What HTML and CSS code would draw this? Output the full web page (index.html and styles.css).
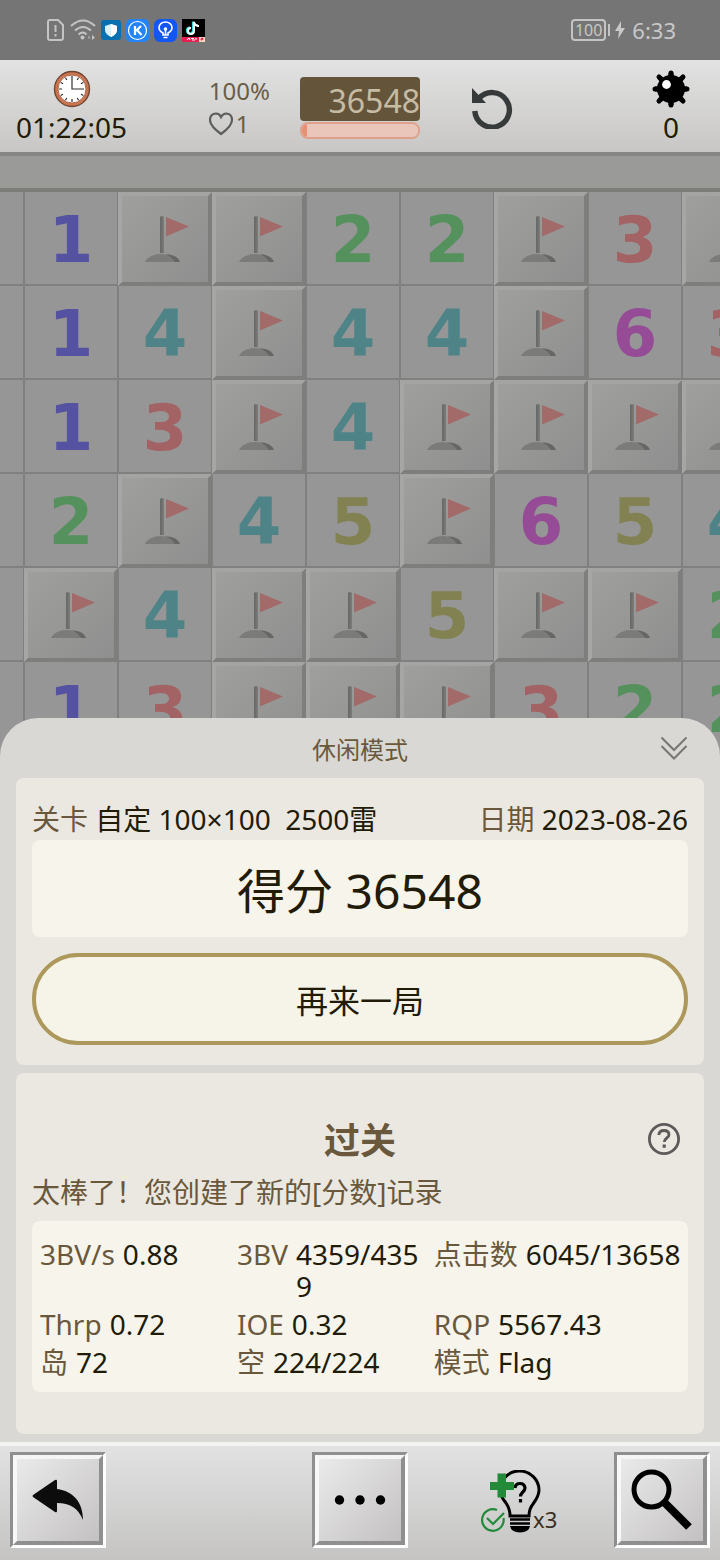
FILE: index.html
```html
<!DOCTYPE html>
<html lang="zh-CN">
<head>
<meta charset="utf-8">
<meta name="viewport" content="width=device-width, initial-scale=1">
<title>休闲模式</title>
<link rel="stylesheet" href="styles.css">
</head>
<body>
<svg class="defs" aria-hidden="true">
  <linearGradient id="pole"><stop offset="0" stop-color="#666664"/><stop offset="1" stop-color="#7c7c7a"/></linearGradient>
  <symbol id="flag" viewBox="4 4 86 86">
    <path d="M45 70c0-4 2-7 4-7.500C55 62 61 66 62 70z" fill="#666664"/>
    <path d="M27 70C29 65 36 62 43 62s11 3 14 8z" fill="#7b7b79"/>
    <path d="M42 25q2-2 4 0v36h-4z" fill="url(#pole)"/>
    <path d="M48 25l23 9.500L48 44.500z" fill="#a26a68"/>
  </symbol>
</svg>

<header class="status">
  <div class="status-group">
    <svg width="18" height="22" viewBox="0 0 18 22" fill="none" stroke="#c4c4c4" stroke-width="2"><path d="M3 1h8l5 5v13q0 2-2 2H3q-2 0-2-2V3q0-2 2-2z"/><path d="M8.500 6v7M8.500 15v2.500"/></svg>
    <svg width="26" height="22" viewBox="0 0 26 22" fill="none" stroke="#c4c4c4" stroke-width="2"><path d="M1 7q12-11 24 0M5 11.500q8-7 16 0M8.500 15.500q4.500-4 8 0"/><circle cx="12.500" cy="18.500" r="2" fill="#c4c4c4" stroke="none"/><path d="M22 16l3 2.500-3 2.500z" fill="#c4c4c4" stroke="none"/><path d="M19 17v3" stroke="#999"/></svg>
    <svg width="20" height="20" viewBox="0 0 20 20"><rect width="20" height="20" rx="3" fill="#0870b0"/><path d="M10 4l6 2v4q0 4-6 7-6-3-6-7V6z" fill="#d9f1fb"/><path d="M10 4l6 2v4q0 4-6 7z" fill="#fff"/></svg>
    <svg width="23" height="23" viewBox="0 0 23 23" fill="none" stroke="#fff"><rect width="23" height="23" rx="5" fill="#2484f5" stroke="none"/><circle cx="11.500" cy="11.500" r="9" stroke-width="1.200"/><path d="M9 7v9M15 7l-5 5M11 11l4.500 5" stroke-width="2.200"/></svg>
    <svg width="23" height="23" viewBox="0 0 23 23" fill="none" stroke="#fff" stroke-width="1.600"><rect width="23" height="23" rx="6" fill="#1257f4" stroke="none"/><path d="M9 16v-2q-4-2-4-5.500a6.500 5.500 0 0 1 13 0Q18 12 14 14v2zM9.500 18.500h4M11.500 11v5"/><circle cx="11.500" cy="10" r="1" fill="#fff"/></svg>
    <svg width="23" height="23" viewBox="0 0 23 23" fill="none"><path fill="#000" d="M0 0h23v23H0z"/><path d="M12 3v9a3 3 0 1 1-3-3M12 3q1 4 5 4" stroke="#35d9df" stroke-width="2.200" transform="translate(-1 -.5)"/><path d="M12 3v9a3 3 0 1 1-3-3M12 3q1 4 5 4" stroke="#fff" stroke-width="2"/><path fill="#e91e50" d="M0 18h23v5H0z"/><path fill="#ffd8c0" d="M17 18h6v5h-6z"/><path d="M5 21l2-2 1 2M9 19.500h3M10 21h3M14 19v2" stroke="#fff"/><path d="M19 21l2-2" stroke="#e91e50" stroke-width="2"/></svg>
  </div>
  <div class="status-group">
    <span class="battery">100</span><span class="battery-tip"></span>
    <svg width="10" height="20" viewBox="0 0 10 20" fill="#c8c8c8"><path d="M6 1L0 11h4l-1 8 7-11H6z"/></svg>
    <span class="time">6:33</span>
  </div>
</header>

<section class="toolbar">
  <div class="side side-left">
    <div class="readout">
      <svg width="38" height="38" viewBox="0 0 38 38"><circle cx="19" cy="19" r="17.500" fill="#cc7350" stroke="#6e4634" stroke-width="1.400"/><circle cx="19" cy="19" r="14" fill="#fff" stroke="#a9694f"/><g stroke="#333" stroke-width="1.200"><path d="M19 6v3M19 29v3M6 19h3M12.500 7.700l1.300 2.300M24.200 28l1.300 2.300M7.700 12.500l2.300 1.300M28 24.200l2.300 1.300M7.700 25.500l2.300-1.300M28 13.800l2.300-1.300M12.500 30.300l1.300-2.300M24.200 10l1.300-2.300M19 9v10h12" fill="none"/></g></svg>
      <span>01:22:05</span>
    </div>
    <div class="lives">
      <span>100%</span>
      <span class="hearts"><svg width="25" height="24" viewBox="0 0 25 24" fill="none" stroke="#5d5d5d" stroke-width="2.200"><path d="M12 22Q1 14 1 8 1 2 7 1.500q3.500 0 5 3.500 2-3.500 5.500-3.500Q23 2 23 8q0 6-11 14z"/></svg>1</span>
    </div>
  </div>
  <div class="score">
    <div class="score-value">36548</div>
    <progress class="score-bar" value="4" max="100" aria-label="进度"></progress>
  </div>
  <div class="side side-right">
    <button class="undo" aria-label="撤销"><svg width="42" height="42" viewBox="0 0 42 42"><path d="M8 11.500A17.300 17.300 0 1 1 3.800 24" fill="none" stroke="#373a3b" stroke-width="5.400"/><path d="M1 1l14 15H1z" fill="#373a3b"/></svg></button>
    <div class="readout">
      <svg width="38" height="38" viewBox="0 0 38 38"><path d="M19 3v32M3 19h32M7 7l24 24M31 7L7 31" stroke="#000" stroke-width="5" stroke-linecap="round"/><path d="M19 3v32M3 19h32M8 8l22 22M30 8L8 30" stroke="#000" stroke-width="5"/><circle cx="19" cy="19" r="14" fill="#000"/><circle cx="14.500" cy="14.500" r="4.400" fill="#fff"/></svg>
      <span>0</span>
    </div>
  </div>
</section>

<div class="ledge"></div>

<main class="board" aria-label="雷区">
  <div class="cells">
    <button class="cell"></button><button class="cell n1">1</button><button class="cell up"><svg><use href="#flag"/></svg></button><button class="cell up"><svg><use href="#flag"/></svg></button><button class="cell n2">2</button><button class="cell n2">2</button><button class="cell up"><svg><use href="#flag"/></svg></button><button class="cell n3">3</button><button class="cell up"><svg><use href="#flag"/></svg></button>
    <button class="cell"></button><button class="cell n1">1</button><button class="cell n4">4</button><button class="cell up"><svg><use href="#flag"/></svg></button><button class="cell n4">4</button><button class="cell n4">4</button><button class="cell up"><svg><use href="#flag"/></svg></button><button class="cell n6">6</button><button class="cell n3">3</button>
    <button class="cell"></button><button class="cell n1">1</button><button class="cell n3">3</button><button class="cell up"><svg><use href="#flag"/></svg></button><button class="cell n4">4</button><button class="cell up"><svg><use href="#flag"/></svg></button><button class="cell up"><svg><use href="#flag"/></svg></button><button class="cell up"><svg><use href="#flag"/></svg></button><button class="cell up"><svg><use href="#flag"/></svg></button>
    <button class="cell"></button><button class="cell n2">2</button><button class="cell up"><svg><use href="#flag"/></svg></button><button class="cell n4">4</button><button class="cell n5">5</button><button class="cell up"><svg><use href="#flag"/></svg></button><button class="cell n6">6</button><button class="cell n5">5</button><button class="cell n4">4</button>
    <button class="cell"></button><button class="cell up"><svg><use href="#flag"/></svg></button><button class="cell n4">4</button><button class="cell up"><svg><use href="#flag"/></svg></button><button class="cell up"><svg><use href="#flag"/></svg></button><button class="cell n5">5</button><button class="cell up"><svg><use href="#flag"/></svg></button><button class="cell up"><svg><use href="#flag"/></svg></button><button class="cell n2">2</button>
    <button class="cell"></button><button class="cell n1">1</button><button class="cell n3">3</button><button class="cell up"><svg><use href="#flag"/></svg></button><button class="cell up"><svg><use href="#flag"/></svg></button><button class="cell up"><svg><use href="#flag"/></svg></button><button class="cell n3">3</button><button class="cell n2">2</button><button class="cell n2">2</button>
  </div>
</main>

<section class="sheet">
  <div class="sheet-head">
    <h1>休闲模式</h1>
    <button class="collapse" aria-label="收起"><svg width="28" height="24" viewBox="0 0 28 24" fill="none" stroke="#777674" stroke-width="2"><path d="M1.500 1.500L14 14 26.500 1.500M1.500 10L14 22.500 26.500 10"/></svg></button>
  </div>

  <div class="card card-score">
    <div class="meta">
      <span><span class="label">关卡</span> 自定 100×100&nbsp; 2500雷</span>
      <span><span class="label">日期</span> 2023-08-26</span>
    </div>
    <div class="panel total">得分 36548</div>
    <button class="again">再来一局</button>
  </div>

  <div class="card card-result">
    <div class="result-head">
      <h2>过关</h2>
      <button class="help" aria-label="帮助"><svg width="34" height="34" viewBox="0 0 34 34" fill="none" stroke="#5c5a5a" stroke-width="2.800"><circle cx="17" cy="17" r="14.600"/><path d="M11.800 13q.4-4.500 5.200-4.500t5 4.200c0 3-4.500 3.500-4.800 7.300"/><path d="M17.200 22.500v3.300" stroke-width="3.200"/></svg></button>
    </div>
    <p class="message">太棒了！您创建了新的[分数]记录</p>
    <dl class="panel stats">
      <div><dt>3BV/s</dt><dd>0.88</dd></div>
      <div><dt>3BV</dt><dd>4359/4359</dd></div>
      <div><dt>点击数</dt><dd class="whole">6045/13658</dd></div>
      <div><dt>Thrp</dt><dd>0.72</dd></div>
      <div><dt>IOE</dt><dd>0.32</dd></div>
      <div><dt>RQP</dt><dd>5567.43</dd></div>
      <div><dt>岛</dt><dd>72</dd></div>
      <div><dt>空</dt><dd>224/224</dd></div>
      <div><dt>模式</dt><dd>Flag</dd></div>
    </dl>
  </div>
</section>

<nav class="bottom">
  <div><button class="key" aria-label="返回"><span><svg width="60" height="60" viewBox="0 0 60 60"><path d="M5 25L27 10q2-1 2 1v8c16 2 26 13 26 31-5-12-13-17-26-17v8q0 2-2 1L5 27q-1-1 0-2z" fill="#0c0c0c"/></svg></span></button></div>
  <button class="key" aria-label="更多"><span><svg width="60" height="60" viewBox="0 0 60 60"><circle cx="9.500" cy="30" r="4.700"/><circle cx="30" cy="30" r="4.700"/><circle cx="50.500" cy="30" r="4.700"/></svg></span></button>
  <div class="bottom-right">
    <button class="hint" aria-label="提示 x3">
      <svg width="60" height="64" viewBox="0 0 60 64" fill="none"><path d="M29 46q0-7-4-13c-3-4-6-7-6-13a19.500 19 0 0 1 39 0c0 6-3 10-6 14q-4 5-4 12z" stroke="#000" stroke-width="3"/><path d="M29 49.500h20M29 53.500h20" stroke="#000" stroke-width="2.600"/><path d="M29 56h20q-1 6-10 6.500Q30 62 29 56z" fill="#000"/><path d="M34 18q.5-4.500 5-4.500t5 4.500c0 4-4.500 4-4.500 8.500M39.500 29v3.500" stroke="#000" stroke-width="3.200"/><path d="M16.500 3.500h8.500V12h8v8h-8v7.500h-8.500V20H9v-8h7.500z" fill="#228b3a"/><path d="M16 40A10.800 10.800 0 1 0 22.500 48M6 48l6 6 11-11" stroke="#228b3a" stroke-width="2.200"/></svg>
      <span>x3</span>
    </button>
    <button class="key" aria-label="搜索"><span><svg width="64" height="64" viewBox="0 0 64 64" fill="none" stroke="#000"><circle cx="21.500" cy="21.500" r="17.500" stroke-width="5"/><path d="M34 34l25 25" stroke-width="8"/></svg></span></button>
  </div>
</nav>
</body>
</html>
```

FILE: styles.css
```css
* { box-sizing: border-box; }

body {
  margin: 0;
  min-height: 100vh;
  display: flex;
  flex-direction: column;
  overflow-x: hidden;
  background: #979795;
  color: #211b08;
  font-family: "Noto Sans", "Noto Sans CJK SC", sans-serif;
  font-size: 28px;
}

button {
  padding: 0;
  border: 0;
  background: none;
  color: inherit;
  font: inherit;
  cursor: pointer;
}

svg { display: block; flex: none; }
h1, h2, p, dl, dd { margin: 0; }
.defs { position: absolute; width: 0; height: 0; }

/* Status bar */
.status {
  display: flex;
  justify-content: space-between;
  align-items: center;
  height: 60px;
  padding: 0 44px 0 47px;
  background: #757575;
  color: #c8c8c8;
}
.status-group { display: flex; align-items: center; gap: 5px; }
.battery {
  padding: 0 2px;
  border: 2px solid #c4c4c4;
  border-radius: 4px;
  font-size: 16px;
  line-height: 18px;
}
.battery-tip { width: 2px; height: 12px; margin-left: -3px; background: #c4c4c4; }
.time { margin-left: 2px; font-size: 22px; line-height: 32px; }

/* Game toolbar */
.toolbar {
  display: grid;
  grid-template-columns: 1fr 120px 1fr;
  height: 92px;
  background: linear-gradient(#e2e2e2, #c8c7c5);
}
.side { display: flex; justify-content: space-between; }
.side-left { padding: 10px 30px 0 16px; }
.side-right { padding: 10px 30px 0 51px; }
.readout { display: flex; flex-direction: column; align-items: center; min-width: 38px; line-height: 38px; }
.lives { padding-top: 4px; color: #6a5d46; font-size: 24px; line-height: 33px; }
.lives > span { display: block; }
.lives .hearts { display: flex; align-items: center; gap: 2px; }
.score { padding-top: 17px; }
.score-value {
  padding-top: 4px;
  border-radius: 4px;
  background: #64543a;
  color: #c6bba4;
  font-size: 32px;
  line-height: 40px;
  text-align: right;
}
.score-bar {
  appearance: none;
  display: block;
  width: 100%;
  height: 17px;
  margin-top: 1px;
  border: 2px solid #dfa18c;
  border-radius: 8px;
  overflow: hidden;
}
.score-bar::-webkit-progress-bar { background: #e9c5ba; }
.score-bar::-webkit-progress-value { background: #e98f76; }
.undo { align-self: flex-start; margin-top: 17px; }

.ledge {
  height: 40px;
  border-top: 4px solid #868684;
  border-bottom: 4px solid #7c7c79;
  background: #9a9a98;
}

/* Mine field */
.board {
  flex: 1 0 0;
  min-height: 300px;
  overflow: hidden;
  background: #969696;
}
.cells {
  display: grid;
  grid-template-columns: repeat(9, 94px);
  grid-auto-rows: 94px;
  width: max-content;
  margin-left: -70px;
}
.cell {
  padding-top: 4px;
  border: 1px solid #808080;
  border-width: 0 1px 2px;
  background: #969696;
  font: bold 64px/88px "DejaVu Sans", sans-serif;
  overflow: hidden;
}
.cell.up {
  padding: 0;
  border: 4px solid;
  border-color: #a4a4a2 #7e7e7d #7e7e7d #a6a6a5;
  background: linear-gradient(135deg, #9f9f9d, #8f8f8f);
}
.cell svg { width: 86px; height: 86px; }
.n1 { color: #5452a1; }
.n2 { color: #54915c; }
.n3 { color: #a36263; }
.n4 { color: #4e8488; }
.n5 { color: #828151; }
.n6 { color: #954b95; }

/* Result sheet */
.sheet {
  position: relative;
  margin-top: -48px;
  padding: 0 16px 8px;
  border-radius: 38px 38px 0 0;
  background: #d9d8d4;
}
.sheet-head {
  display: grid;
  grid-template-columns: 1fr auto 1fr;
  align-items: center;
  height: 60px;
}
.sheet-head h1 {
  grid-column: 2;
  color: #6a583c;
  font-size: 24px;
  font-weight: 400;
}
.collapse { justify-self: end; margin-right: 16px; }
.card { border-radius: 8px; background: #ebe8e1; }
.panel { border-radius: 8px; background: #f7f4eb; }
.label, dt { color: #6a583c; }

.card-score { padding: 20px 16px; }
.meta { display: flex; justify-content: space-between; line-height: 42px; }
.total { padding-top: 4px; font-size: 48px; line-height: 93px; text-align: center; }
.again {
  display: block;
  width: 100%;
  height: 92px;
  margin-top: 16px;
  border: 4px solid #ab985a;
  border-radius: 46px;
  background: #f6f3e8;
  font-size: 32px;
}

.card-result { margin-top: 8px; padding: 42px 16px; }
.result-head {
  display: grid;
  grid-template-columns: 1fr auto 1fr;
  align-items: center;
}
.result-head h2 {
  grid-column: 2;
  padding-top: 4px;
  color: #6a583c;
  font-size: 36px;
  line-height: 44px;
}
.help { justify-self: end; margin-right: 7px; }
.message { color: #6a583c; line-height: 58px; }
.stats {
  display: grid;
  grid-template-columns: 4fr 4fr 5fr;
  padding: 14px 8px 11px;
  line-height: 32px;
}
.stats div { display: flex; gap: 8px; padding: 3px 8px 3px 0; }
.stats dt { flex: none; }
.stats dd { word-break: break-all; }
.stats .whole { white-space: nowrap; }

/* Bottom keys */
.bottom {
  display: grid;
  grid-template-columns: 1fr auto 1fr;
  padding: 6px 10px 12px;
  border-top: 4px solid #f3f3f2;
  background: linear-gradient(#e2e2e2, #c5c4c3);
}
.key {
  display: block;
  width: 96px;
  height: 96px;
  border: 3px solid;
  border-color: #8f8f8f #fdfdfd #fdfdfd #8f8f8f;
}
.key span {
  display: grid;
  place-items: center;
  height: 100%;
  border: 4px solid;
  border-color: #f5f5f5 #8f8f8f #8f8f8f #f8f8f8;
  background: linear-gradient(135deg, #ebeaea, #c3c1c2);
}
.bottom-right { display: flex; justify-content: space-between; }
.hint {
  display: flex;
  align-items: flex-end;
  margin-left: 73px;
  padding-bottom: 14px;
  color: #3a3020;
  font-size: 22px;
  line-height: 26px;
}
.hint span { margin-left: -8px; padding-bottom: 2px; }
```
